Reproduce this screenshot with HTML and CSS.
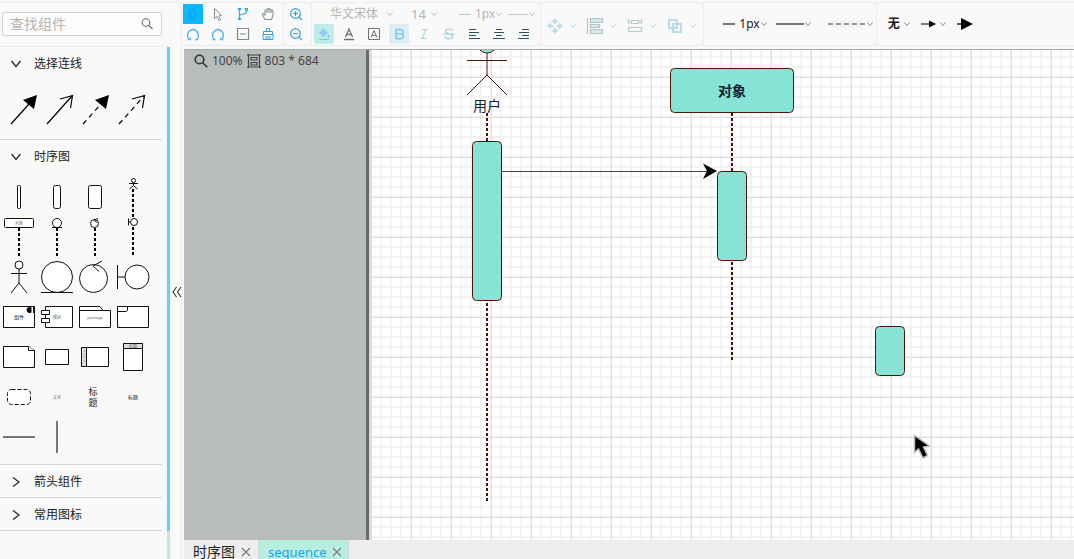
FILE: index.html
```html
<!DOCTYPE html>
<html lang="zh-CN">
<head>
<meta charset="utf-8">
<title>sequence</title>
<link rel="stylesheet" href="styles.css">
</head>
<body>
<svg class="defs" aria-hidden="true">
  <symbol id="caret" viewBox="0 0 6 6"><path d="M.5 1.500 3 4.500 5.500 1.500" fill="none" stroke="currentColor"/></symbol>
  <symbol id="down" viewBox="0 0 12 12"><path d="M1.500 3 6 8.500 10.500 3" fill="none" stroke="#222" stroke-width="1.200"/></symbol>
  <symbol id="right" viewBox="0 0 12 12"><path d="M3 1.500 9 6 3 10.500" fill="none" stroke="#222" stroke-width="1.200"/></symbol>
  <symbol id="cross" viewBox="0 0 10 10"><path d="M1 1 9 9M9 1 1 9" stroke="#777" stroke-width="1.100"/></symbol>
</svg>
<div class="topline"></div>
<div class="app">
  <aside class="sidebar">
    <div class="search">
      <label class="search-box">
        <input class="search-input" type="text" placeholder="查找组件" aria-label="查找组件">
        <svg width="12" height="12" viewBox="0 0 12 12" fill="none" stroke="#666" stroke-width="1.100"><circle cx="5" cy="4.500" r="3.800"/><path d="M7.800 7.300 11.500 11"/></svg>
      </label>
    </div>
    <div class="scroll">
      <div class="sections">
        <section class="section">
          <button class="head"><svg width="12" height="12"><use href="#down"/></svg>选择连线</button>
          <div class="links">
            <svg viewBox="0 0 36 40"><path d="M11 35 29 15" stroke="#000" stroke-width="1.200"/><path d="M37 6 23 11 34 20z"/></svg>
            <svg viewBox="0 0 36 40"><path d="M11 35 36 7M24 10 36.500 6.500 34.500 19" fill="none" stroke="#000" stroke-width="1.200"/></svg>
            <svg viewBox="0 0 36 40"><path d="M11 35 29 15" stroke="#000" stroke-width="1.200" stroke-dasharray="5 4"/><path d="M37 6 23 11 34 20z"/></svg>
            <svg viewBox="0 0 36 40"><path d="M11 35 36 7" stroke="#000" stroke-width="1.200" stroke-dasharray="5 4"/><path d="M24 10 36.500 6.500 34.500 19" fill="none" stroke="#000" stroke-width="1.200"/></svg>
          </div>
        </section>
        <section class="section">
          <button class="head"><svg width="12" height="12"><use href="#down"/></svg>时序图</button>
          <div class="shapes">
            <svg viewBox="0 0 38 40"><rect x="17.500" y="8.500" width="3" height="23" rx="1"/></svg>
            <svg viewBox="0 0 38 40"><rect x="15.500" y="8.500" width="7" height="23" rx="2"/></svg>
            <svg viewBox="0 0 38 40"><rect x="12.500" y="8.500" width="13" height="23" rx="2"/></svg>
            <svg viewBox="0 0 38 40"><circle cx="19.500" cy="3.500" r="2"/><path d="M15 6.500h9M19.500 6v2.500L15.500 12M19.500 8.500l4 3.500"/><path class="dots" d="M19 12v28"/></svg>

            <svg viewBox="0 0 38 40"><rect x="4.500" y="1.500" width="29" height="9" rx="1"/><text class="tiny" x="19" y="8">对象</text><path class="dots" d="M19 11v28"/></svg>
            <svg viewBox="0 0 38 40"><circle cx="19" cy="6" r="4.500"/><path d="M14 10.500h10"/><path class="dots" d="M19 11v28"/></svg>
            <svg viewBox="0 0 38 40"><circle cx="18.500" cy="6.500" r="4"/><path d="M22 1.500 18 3l3 2.500" fill="none"/><path class="dots" d="M19 11v28"/></svg>
            <svg viewBox="0 0 38 40"><circle cx="20" cy="5" r="3.500"/><path d="M14.500 1.500v7M14.500 5h2"/><path class="dots" d="M19 10v29"/></svg>

            <svg viewBox="0 0 38 40"><circle cx="19" cy="8" r="4"/><path d="M11 16.500h16M19 12v14L11 36M19 26l8 10" fill="none"/></svg>
            <svg viewBox="0 0 38 40"><circle cx="19" cy="20" r="15.500"/><path d="M3 35.500h32"/></svg>
            <svg viewBox="0 0 38 40"><circle cx="17.500" cy="21.500" r="14"/><path d="M26 4 17 9l6 5.500" fill="none"/></svg>
            <svg viewBox="0 0 38 40"><circle cx="23" cy="20" r="12"/><path d="M3.500 8v24M3.500 20H11"/></svg>

            <svg viewBox="0 0 38 40"><rect x="3.500" y="9.500" width="31" height="21"/><text class="tiny dark" x="19" y="22">组件</text><path d="M31 10.500h-2a2 2.500 0 0 0 0 5h2z" fill="#000"/><path d="M33.500 10v6"/></svg>
            <svg viewBox="0 0 38 40"><path d="M7.500 9.500h27v21h-27z"/><path d="M3.500 13.500h8v4h-8zM3.500 21.500h8v4h-8z"/><text class="tiny" x="19" y="22">模块</text></svg>
            <svg viewBox="0 0 38 40"><path d="M3.500 9.500H24l3 4H3.500zM3.500 13.500h31v17h-31z"/><text class="tiny" x="19" y="22">package</text></svg>
            <svg viewBox="0 0 38 40"><path d="M3.500 9.500h31v21h-31z"/><path d="M3.500 14.500h9l1-1v-4"/></svg>

            <svg viewBox="0 0 38 40"><path d="M3.500 9.500h25l6 4v17h-31z"/><path d="M28.500 9.500v4h6"/></svg>
            <svg viewBox="0 0 38 40"><path d="M7.500 12.500h23v15h-23z"/></svg>
            <svg viewBox="0 0 38 40"><path d="M5.500 10.500h27v19h-27z"/><path class="shade" d="M5.500 10.500h5v19h-5z"/><path d="M8.500 13v2M7.500 17h2M8.500 19v2M7.500 24h2" stroke="#aaa"/></svg>
            <svg viewBox="0 0 38 40"><path d="M9.500 6.500h19v27h-19z"/><path class="shade" d="M9.500 6.500h19v5h-19z"/><text class="tiny" x="19" y="11">标题</text></svg>

            <svg viewBox="0 0 38 40"><rect x="7.500" y="12.500" width="23" height="15" rx="4" stroke-dasharray="4 2"/></svg>
            <svg viewBox="0 0 38 40"><text class="tiny" x="19" y="22">文本</text></svg>
            <svg viewBox="0 0 38 40"><text class="mid" x="17" y="18">标</text><text class="mid" x="17" y="29">题</text></svg>
            <svg viewBox="0 0 38 40"><text class="tiny dark" x="19" y="22">标题</text></svg>

            <svg viewBox="0 0 38 40"><path d="M3 20h32" stroke="#777" stroke-width="2"/></svg>
            <svg viewBox="0 0 38 40"><path d="M19 4v32" stroke="#777" stroke-width="2"/></svg>
          </div>
        </section>
        <section class="section"><button class="head"><svg width="12" height="12"><use href="#right"/></svg>箭头组件</button></section>
        <section class="section"><button class="head"><svg width="12" height="12"><use href="#right"/></svg>常用图标</button></section>
      </div>
      <div class="track"><div class="thumb"></div></div>
    </div>
  </aside>
  <div class="gutter">
    <button class="collapse" aria-label="收起"><svg width="10" height="12" viewBox="0 0 10 12" fill="none" stroke="#333" stroke-width="1.100"><path d="M4.500 1 1 6l3.500 5M9 1 5.500 6 9 11"/></svg></button>
  </div>
  <main class="work">
    <div class="toolbar">
      <div class="group tools">
        <button class="tool selected" aria-label="锁定"><svg viewBox="0 0 20 20" fill="#0cb0f5" stroke="#08a0e6"><path d="M6 8q4-5 8 0v5q-4 5-8 0z"/><path d="M5 8h1M14 8h1M5 12h1M14 12h1"/></svg></button>
        <button class="tool" aria-label="选择"><svg viewBox="0 0 20 20" fill="none" stroke="#879295"><path d="M6.500 4.500v10l2.500-2 2 4 1.500-.8-1.700-3.900 3-.3z"/></svg></button>
        <button class="tool" aria-label="连线"><svg viewBox="0 0 20 20" fill="none" stroke="#36a9e8" stroke-width="1.200"><path d="M6.500 6v8M6.500 13q0-3 4-3 3 0 3-3"/><path d="M5.500 4.500h2v1h-2zM5.500 14.500h2v1h-2zM12.500 4.500h2v2h-2z"/></svg></button>
        <button class="tool" aria-label="拖动"><svg viewBox="0 0 20 20" fill="none" stroke="#879295" stroke-width="1.100"><path d="M7 15.500 4.500 11q-.5-2 1.500-1l1 1V6.500q1-1.500 2 0 0-3 2-1.500 2-1 2 1.500 2-1 2 1v4l-1.500 4zM9 6.500V9M11 5.500V9M13 6.500V9"/></svg></button>
        <button class="tool" aria-label="撤销"><svg viewBox="0 0 20 20" fill="none" stroke="#4db1ea" stroke-width="1.300"><path d="M7.500 15.500H5.500q-2-5 .5-8 4-4 8 0 2.500 3 .5 8h-2M7.500 15.500v-2"/></svg></button>
        <button class="tool" aria-label="重做"><svg viewBox="0 0 20 20" fill="none" stroke="#4db1ea" stroke-width="1.300"><path d="M7.500 15.500H5.500q-2-5 .5-8 4-4 8 0 2.500 3 .5 8h-2M12.500 15.500v-2"/></svg></button>
        <button class="tool" aria-label="折叠"><svg viewBox="0 0 20 20" fill="none" stroke="#7f8a8d" stroke-width="1.200"><path d="M4.500 4.500h11v11h-11zM7 10h6"/></svg></button>
        <button class="tool" aria-label="清除"><svg viewBox="0 0 20 20" fill="none" stroke="#36a0e0"><path d="M8.500 7.500v-3h3v3M5.500 7.500h9v3h-9zM5 10.500h10v5H5zM8 12v3M10 12v3M12 12v3"/></svg></button>
      </div>
      <div class="group zooms">
        <button class="tool" aria-label="放大"><svg viewBox="0 0 20 20" fill="none" stroke="#36a0e0" stroke-width="1.200"><circle cx="9.500" cy="9.500" r="4.800"/><path d="m13 13 3 3M7 9.500h5M9.500 7v5"/></svg></button>
        <button class="tool" aria-label="缩小"><svg viewBox="0 0 20 20" fill="none" stroke="#36a0e0" stroke-width="1.200"><circle cx="9.500" cy="9.500" r="4.800"/><path d="m13 13 3 3M7 9.500h5"/></svg></button>
      </div>
      <div class="group text">
        <div class="row">
          <label class="pick font"><select class="select" aria-label="字体"><option>华文宋体</option></select><svg class="caret"><use href="#caret"/></svg></label>
          <label class="pick size"><select class="select" aria-label="字号"><option>14</option></select><svg class="caret"><use href="#caret"/></svg></label>
          <button class="drop"><i class="rule"></i>1px<svg class="caret"><use href="#caret"/></svg></button>
          <button class="drop line" aria-label="边框样式"><i class="rule long"></i><svg class="caret"><use href="#caret"/></svg></button>
        </div>
        <div class="row marks">
          <button class="tool fill" aria-label="填充"><svg viewBox="0 0 20 20"><path d="m9 4 5 5-4.500 4L5 9z" fill="#8ed0ea"/><path d="M14.500 10.500q2 3 0 3t0-3z" fill="#6ebde4"/><path d="M5 15.500h10" stroke="#79c6df"/></svg></button>
          <button class="tool" aria-label="文字颜色"><svg viewBox="0 0 20 20" fill="none" stroke="#697477" stroke-width="1.300"><path d="m6.500 13 3.500-8 3.500 8M7.500 10.500h5M5 15.500h10"/></svg></button>
          <button class="tool" aria-label="边框颜色"><svg viewBox="0 0 20 20" fill="none" stroke="#776e76"><path d="M4.500 4.500h11v11h-11zM7 13.500 10 6.500l3 7M8 11.500h4"/></svg></button>
          <button class="tool bold" aria-label="加粗"><svg viewBox="0 0 20 20" fill="none" stroke="#7cc4ee" stroke-width="1.400"><path d="M7 5.500h4q3 0 3 2.200t-3 2.200H7h4.500q3 0 3 2.500t-3 2.400H7z"/></svg></button>
          <button class="tool" aria-label="斜体"><svg viewBox="0 0 20 20" fill="none" stroke="#b5d2df" stroke-width="1.200"><path d="M8 5.500h6M6 14.500h6M11.500 5.500l-3 9"/></svg></button>
          <button class="tool" aria-label="删除线"><svg viewBox="0 0 20 20" fill="none" stroke="#a4d0e5" stroke-width="1.200"><path d="M14 7q-1-2-4-2t-3.500 2q0 2 3.500 2.800t4 2.500q-.5 2.500-4 2.500t-4-2.500M4 10h12"/></svg></button>
          <button class="tool" aria-label="左对齐"><svg viewBox="0 0 20 20" stroke="#24536a" stroke-width="1.200"><path d="M5 5.500h7M5 8.500h10M5 11.500h7M5 14.500h11"/></svg></button>
          <button class="tool" aria-label="居中"><svg viewBox="0 0 20 20" stroke="#24536a" stroke-width="1.200"><path d="M7 5.500h6M5 8.500h10M7 11.500h6M4 14.500h12"/></svg></button>
          <button class="tool" aria-label="右对齐"><svg viewBox="0 0 20 20" stroke="#24536a" stroke-width="1.200"><path d="M8 5.500h7M5 8.500h10M8 11.500h7M4 14.500h11"/></svg></button>
        </div>
      </div>
      <div class="group arrange">
        <button class="drop faint" aria-label="移动"><svg width="18" height="18" viewBox="0 0 18 18" fill="#b9dce9"><path d="M9 1 5.500 5h7zM9 17l-3.500-4h7zM1 9l4-3.500v7zM17 9l-4-3.500v7z"/><path d="M9 4v3M9 11v3M4 9h3M11 9h3" stroke="#b9dce9" stroke-width="2"/></svg><svg class="caret"><use href="#caret"/></svg></button>
        <button class="drop faint" aria-label="对齐"><svg width="18" height="18" viewBox="0 0 18 18" fill="#d8eae8" stroke="#b3c4c6" stroke-width="1.200"><path d="M1.500 1v16M4.500 1.500h12v4h-12zM4.500 7.500h9v3h-9zM4.500 12.500h12v4h-12z"/></svg><svg class="caret"><use href="#caret"/></svg></button>
        <button class="drop faint" aria-label="分布"><svg width="18" height="18" viewBox="0 0 18 18" fill="none" stroke="#b7cccc" stroke-width="1.200"><path d="M2.500 2v5M15.500 2v5M5.500 3.500h7v3h-7zM3 5h2M13 5h2M2.500 10.500h13v4h-13z"/></svg><svg class="caret"><use href="#caret"/></svg></button>
        <button class="drop faint" aria-label="组合"><svg width="18" height="18" viewBox="0 0 18 18" fill="none" stroke="#b9dce9" stroke-width="2"><path d="M3 3h8v8H3zM7 7h8v8H7z"/></svg><svg class="caret"><use href="#caret"/></svg></button>
      </div>
      <div class="group strokes">
        <button class="drop"><i class="rule"></i>1px<svg class="caret"><use href="#caret"/></svg></button>
        <button class="drop" aria-label="线条类型"><i class="rule solid"></i><svg class="caret"><use href="#caret"/></svg></button>
        <button class="drop dashed" aria-label="虚线类型"><svg width="38" height="2" viewBox="0 0 38 2"><path d="M0 1h38" stroke="#777" stroke-width="1.500" stroke-dasharray="5 3"/></svg><svg class="caret"><use href="#caret"/></svg></button>
      </div>
      <div class="group ends">
        <button class="drop none">无<svg class="caret"><use href="#caret"/></svg></button>
        <button class="drop" aria-label="起点箭头"><svg width="15" height="10" viewBox="0 0 15 10"><path d="M0 5h9" stroke="#333" stroke-width="1.300"/><path d="M8 1.500 15 5 8 8.500z"/></svg><svg class="caret"><use href="#caret"/></svg></button>
        <button class="drop" aria-label="终点箭头"><svg width="16" height="14" viewBox="0 0 16 14"><path d="M0 7h6" stroke="#333" stroke-width="1.600"/><path d="M4 1 16 7 4 13z"/></svg></button>
      </div>
    </div>
    <div class="canvas">
      <div class="status">
        <svg width="14" height="14" viewBox="0 0 14 14" fill="none" stroke="#333" stroke-width="1.600"><circle cx="5.500" cy="5.500" r="4.300"/><path d="m8.500 8.500 4.800 4.800"/></svg>
        <span>100%</span>
        <svg width="14" height="14" viewBox="0 0 14 14" fill="none" stroke="#444" stroke-width="1.200"><path d="M1.500 0v14M12.500 0v14M0 1h14M0 13h14M4 3.500h6v2.500H4zM4 8.500h6v2.500H4z"/></svg>
        <span>803 * 684</span>
      </div>
      <div class="backdrop"></div>
      <div class="paper">
        <svg class="diagram" width="703" height="490" viewBox="371 50 703 490">
          <g class="node">
            <circle cx="487" cy="43" r="10"/>
            <path class="thin" d="M487 53v22L467 95M487 75l20 20M467 60.500h40"/>
          </g>
          <path class="life" d="M487 113v28M487 303v198M732 113v58M732 262v98"/>
          <g class="node">
            <rect x="472.500" y="141.500" width="29" height="159" rx="4"/>
            <rect x="670.500" y="68.500" width="123" height="44" rx="4"/>
            <rect x="717.500" y="171.500" width="29" height="89" rx="4"/>
            <rect x="875.500" y="326.500" width="29" height="49" rx="4"/>
          </g>
          <text class="label" x="487" y="111">用户</text>
          <text class="label strong" x="732" y="96">对象</text>
          <path d="M502 171.500h206" stroke="#444"/>
          <path d="M703 163.500 717 171l-14 8 4-8z"/>
          <path d="M914.500 435.500v17l4-3.500 4.500 9 4.500-2.500-4-8.500 6-1z" fill="#000" stroke="#bbb" stroke-width="1.500"/>
        </svg>
      </div>
    </div>
    <nav class="tabs">
      <div class="tab"><button class="name">时序图</button><button class="close" aria-label="关闭时序图"><svg width="10" height="10"><use href="#cross"/></svg></button></div>
      <div class="tab current"><button class="name">sequence</button><button class="close" aria-label="关闭sequence"><svg width="10" height="10"><use href="#cross"/></svg></button></div>
    </nav>
  </main>
</div>
</body>
</html>
```

FILE: styles.css
```css
* { box-sizing: border-box; }
body {
  margin: 0;
  height: 100vh;
  display: flex;
  flex-direction: column;
  overflow: hidden;
  background: #f9f9f9;
  color: #222;
  font: 12px/16px "Noto Sans", "Noto Sans CJK SC", sans-serif;
}
button, select, input { font: inherit; color: inherit; }
button { margin: 0; padding: 0; border: 0; background: none; }
svg { display: block; flex: none; }
.defs { position: absolute; width: 0; height: 0; }
.topline { flex: none; height: 3px; border-bottom: 1px solid #ececec; }
.app { flex: 1; display: flex; min-height: 0; }

.sidebar { flex: none; width: 170px; display: flex; flex-direction: column; }
.search { height: 44px; padding: 9px 8px 0 2px; border-bottom: 1px solid #ececec; }
.search-box { display: flex; align-items: center; height: 24px; padding: 0 8px 0 7px; border: 1px solid #d2d2d2; border-radius: 2px; background: #fcfcfc; }
.search-input { flex: 1; min-width: 0; padding: 0; border: 0; outline: 0; background: none; font-size: 14px; }
.search-input::placeholder { color: #b5b5b5; }
.scroll { flex: 1; display: flex; min-height: 0; }
.sections { width: 162px; margin-right: 5px; }
.track { width: 3px; background: #c9e0ec; }
.thumb { height: 94.5%; background: #69cdfc; }
.section { border-bottom: 1px solid #d4d4d4; }
.head { display: flex; align-items: center; gap: 12px; width: 100%; height: 32px; padding: 2px 0 0 10px; text-align: left; }
.links { display: grid; grid-template-columns: repeat(4, 36px); height: 60px; padding-top: 10px; }
.links svg { width: 36px; height: 40px; overflow: visible; }
.shapes { display: grid; grid-template-columns: repeat(4, 38px); padding: 5px 0 7px; }
.shapes svg { width: 38px; height: 40px; fill: #fff; stroke: #111; }
.shapes .dots { stroke: #000; stroke-width: 2; stroke-dasharray: 3 2; }
.shapes .shade { fill: #ddd; }
.shapes text { stroke: none; text-anchor: middle; fill: #666; }
.tiny { font-size: 4px; }
.shapes .dark { font-size: 5px; fill: #111; }
.shapes .mid { font-size: 9px; fill: #222; }

.gutter { flex: none; width: 12px; display: flex; align-items: center; border: 1px solid #ececec; border-width: 0 1px 0 0; }
.collapse { padding: 22px 0 0 2px; }

.work { flex: 1; min-width: 0; display: flex; flex-direction: column; }
.toolbar { flex: none; display: flex; height: 43px; border-bottom: 1px solid #ececec; }
.group { flex: none; padding: 1px 5px 1px 2px; border-right: 1px solid #ececec; }
.tool { width: 20px; height: 20px; border-radius: 2px; }
.selected { background: #0cb8fd; border-radius: 0; }
.fill { background: #beede8; }
.bold { background: #deedf4; }
.tools { display: grid; grid-template-columns: repeat(4, 20px); column-gap: 5px; padding-left: 1px; }
.zooms { display: grid; }
.row { display: flex; align-items: center; height: 20px; }
.marks { gap: 5px; }
.text { color: #b4b4b4; }
.pick { display: flex; align-items: center; }
.select { appearance: none; padding: 0; border: 0; background: none; line-height: 20px; outline: 0; }
.font { width: 79px; padding-left: 16px; }
.font .select { width: 57px; }
.size { width: 46px; padding-left: 18px; margin-right: 20px; }
.size .select { width: 20px; font-size: 13px; }
.caret { width: 6px; height: 6px; color: #888; }
.text .caret { color: #bbb; }
.drop { display: flex; align-items: center; gap: 1px; white-space: nowrap; }
.rule { width: 12px; height: 2px; margin-right: 3px; background: #777; }
.text .rule { background: #c4c4c4; height: 1px; }
.text .long { width: 20px; margin-right: 0; }
.solid { width: 28px; margin-right: 0; }
.line { margin-left: 6px; }
.arrange, .strokes, .ends { display: flex; align-items: center; }
.arrange { gap: 10px; padding: 4px 7px 0 5px; }
.faint { gap: 6px; }
.faint .caret { color: #add5e6; }
.strokes { gap: 9px; padding: 0 3px 0 19px; }
.dashed { margin-left: 8px; }
.ends { flex: 1; gap: 11px; padding: 0 0 0 11px; border: 0; }
.ends .drop { gap: 4px; }
.none { font-weight: 700; }

.canvas { position: relative; flex: 1; min-height: 0; display: flex; margin: 3px 0 0 2px; border-top: 1px solid #aaa; }
.status { position: absolute; left: 10px; top: 3px; display: flex; align-items: center; gap: 4px; color: #444; }
.backdrop { flex: none; width: 185px; background: #b8bcbb; border-right: 3px solid #6d6b69; }
.paper {
  flex: 1;
  min-width: 0;
  overflow: hidden;
  border-left: 2px solid #ddd9d6;
  background-color: #fff;
  background-image:
    linear-gradient(to right, #dfdfdf 1px, transparent 1px),
    linear-gradient(#dfdfdf 1px, transparent 1px),
    linear-gradient(to right, #f2f2f2 2px, transparent 2px),
    linear-gradient(#f2f2f2 2px, transparent 2px);
  background-size: 40px 40px, 40px 40px, 10px 10px, 10px 10px;
  background-position: 0 27px, 0 27px, 9px 6px, 9px 6px;
}
.node { fill: #88e3d7; stroke: #4a1608; }
.thin { fill: none; }
.life { fill: none; stroke: #4a1608; stroke-width: 2; stroke-dasharray: 3 2; }
.label { font-size: 14px; text-anchor: middle; fill: #10202c; }
.strong { font-weight: 700; }

.tabs { flex: none; display: flex; height: 19px; margin-left: 2px; overflow: hidden; background: #eee; }
.tab { display: flex; align-items: center; gap: 6px; height: 23px; padding: 0 7px 0 9px; border-right: 2px solid #d8d8d8; font-size: 14px; }
.current { gap: 5px; padding: 0 6px 0 8px; border-right-width: 1px; background: #b8eee0; color: #0aa5f5; font-size: 13px; }
```
